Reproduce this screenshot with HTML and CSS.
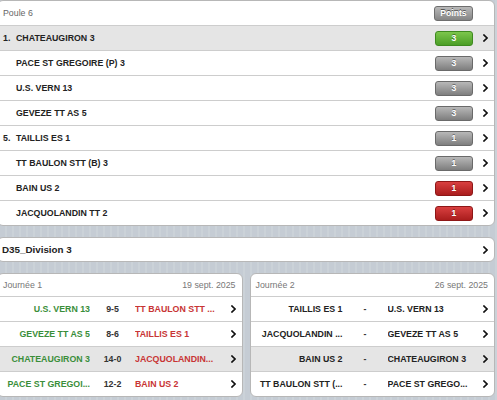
FILE: index.html
```html
<!DOCTYPE html>
<html lang="fr">
<head>
<meta charset="utf-8">
<title>Poule 6</title>
<link rel="stylesheet" href="styles.css">
</head>
<body>
<div class="page">
  <section class="card poule">
    <div class="poule-head">
      <span class="head-title">Poule 6</span>
      <span class="btn-points">Points</span>
    </div>
    <div class="rank-row current"><span class="rank">1.</span><span class="team">CHATEAUGIRON 3</span><span class="badge green">3</span><svg class="chev" viewBox="0 0 5 8"><polyline points="1,1 4,4 1,7"/></svg></div>
    <div class="rank-row"><span class="rank"></span><span class="team">PACE ST GREGOIRE (P) 3</span><span class="badge gray">3</span><svg class="chev" viewBox="0 0 5 8"><polyline points="1,1 4,4 1,7"/></svg></div>
    <div class="rank-row"><span class="rank"></span><span class="team">U.S. VERN 13</span><span class="badge gray">3</span><svg class="chev" viewBox="0 0 5 8"><polyline points="1,1 4,4 1,7"/></svg></div>
    <div class="rank-row"><span class="rank"></span><span class="team">GEVEZE TT AS 5</span><span class="badge gray">3</span><svg class="chev" viewBox="0 0 5 8"><polyline points="1,1 4,4 1,7"/></svg></div>
    <div class="rank-row"><span class="rank">5.</span><span class="team">TAILLIS ES 1</span><span class="badge gray">1</span><svg class="chev" viewBox="0 0 5 8"><polyline points="1,1 4,4 1,7"/></svg></div>
    <div class="rank-row"><span class="rank"></span><span class="team">TT BAULON STT (B) 3</span><span class="badge gray">1</span><svg class="chev" viewBox="0 0 5 8"><polyline points="1,1 4,4 1,7"/></svg></div>
    <div class="rank-row"><span class="rank"></span><span class="team">BAIN US 2</span><span class="badge red">1</span><svg class="chev" viewBox="0 0 5 8"><polyline points="1,1 4,4 1,7"/></svg></div>
    <div class="rank-row"><span class="rank"></span><span class="team">JACQUOLANDIN TT 2</span><span class="badge red">1</span><svg class="chev" viewBox="0 0 5 8"><polyline points="1,1 4,4 1,7"/></svg></div>
  </section>

  <section class="card division">
    <span class="division-name">D35_Division 3</span>
    <svg class="chev" viewBox="0 0 5 8"><polyline points="1,1 4,4 1,7"/></svg>
  </section>

  <div class="days">
    <section class="card day">
      <div class="day-head"><span>Journée 1</span><span>19 sept. 2025</span></div>
      <div class="match"><span class="home win">U.S. VERN 13</span><span class="score">9-5</span><span class="away loss">TT BAULON STT ...</span><svg class="chev" viewBox="0 0 5 8"><polyline points="1,1 4,4 1,7"/></svg></div>
      <div class="match"><span class="home win">GEVEZE TT AS 5</span><span class="score">8-6</span><span class="away loss">TAILLIS ES 1</span><svg class="chev" viewBox="0 0 5 8"><polyline points="1,1 4,4 1,7"/></svg></div>
      <div class="match current"><span class="home win">CHATEAUGIRON 3</span><span class="score">14-0</span><span class="away loss">JACQUOLANDIN...</span><svg class="chev" viewBox="0 0 5 8"><polyline points="1,1 4,4 1,7"/></svg></div>
      <div class="match"><span class="home win">PACE ST GREGOI...</span><span class="score">12-2</span><span class="away loss">BAIN US 2</span><svg class="chev" viewBox="0 0 5 8"><polyline points="1,1 4,4 1,7"/></svg></div>
    </section>
    <section class="card day">
      <div class="day-head"><span>Journée 2</span><span>26 sept. 2025</span></div>
      <div class="match"><span class="home">TAILLIS ES 1</span><span class="score dash">-</span><span class="away">U.S. VERN 13</span><svg class="chev" viewBox="0 0 5 8"><polyline points="1,1 4,4 1,7"/></svg></div>
      <div class="match"><span class="home">JACQUOLANDIN ...</span><span class="score dash">-</span><span class="away">GEVEZE TT AS 5</span><svg class="chev" viewBox="0 0 5 8"><polyline points="1,1 4,4 1,7"/></svg></div>
      <div class="match current"><span class="home">BAIN US 2</span><span class="score dash">-</span><span class="away">CHATEAUGIRON 3</span><svg class="chev" viewBox="0 0 5 8"><polyline points="1,1 4,4 1,7"/></svg></div>
      <div class="match"><span class="home">TT BAULON STT (...</span><span class="score dash">-</span><span class="away">PACE ST GREGO...</span><svg class="chev" viewBox="0 0 5 8"><polyline points="1,1 4,4 1,7"/></svg></div>
    </section>
  </div>
</div>
</body>
</html>
```

FILE: styles.css
```css
html, body {
  margin: 0;
  padding: 0;
}

body {
  background-color: #cbd2d8;
  background-image: repeating-linear-gradient(90deg, #c5ccd4 0 5px, #cbd2d8 5px 7px);
  font-family: "Liberation Sans", Arial, sans-serif;
  font-size: 8.8px;
  color: #222;
  overflow: hidden;
}

.page {
  margin: 0 2px 0 -3px;
}

.card {
  background: #fff;
  border: 1px solid #b7b7b7;
  border-radius: 6px;
  overflow: hidden;
}

.chev {
  width: 5px;
  height: 8px;
  flex: none;
  fill: none;
  stroke: #111;
  stroke-width: 1.6;
  stroke-linecap: square;
}

/* ranking */
.poule-head {
  height: 24px;
  display: flex;
  align-items: center;
  padding: 0 5px;
}

.head-title {
  flex: 1;
  color: #666;
}

.btn-points {
  width: 37px;
  height: 13px;
  margin-right: 16px;
  border: 1px solid #6e6e6e;
  border-radius: 3px;
  background: linear-gradient(#b9b9b9, #858585);
  color: #fff;
  font-weight: bold;
  font-size: 8.6px;
  line-height: 13px;
  text-align: center;
  text-shadow: 0 -1px 0 #555;
}

.rank-row {
  height: 24px;
  border-top: 1px solid #cdcdcd;
  display: flex;
  align-items: center;
  padding: 0 6px 0 5px;
  font-weight: bold;
}

.rank-row.current {
  background: #e5e5e5;
}

.rank {
  width: 13px;
  flex: none;
}

.team {
  flex: 1;
  white-space: nowrap;
}

.badge {
  width: 36px;
  height: 13px;
  margin-right: 10px;
  border: 1px solid #666;
  border-radius: 3px;
  color: #fff;
  font-size: 8.6px;
  line-height: 13px;
  text-align: center;
  text-shadow: 0 -1px 0 rgba(0, 0, 0, 0.4);
}

.badge.green {
  background: linear-gradient(#7cc64c, #4b9e26);
  border-color: #3e8a1f;
}

.badge.gray {
  background: linear-gradient(#b8b8b8, #7e7e7e);
  border-color: #6a6a6a;
}

.badge.red {
  background: linear-gradient(#d94040, #aa1d1d);
  border-color: #8e1717;
}

/* division */
.division {
  margin-top: 11px;
  height: 23px;
  display: flex;
  align-items: center;
  padding: 0 6px 0 4px;
}

.division-name {
  flex: 1;
  font-size: 9.8px;
  font-weight: bold;
  color: #222;
}

/* journées */
.days {
  margin-top: 11px;
  display: grid;
  grid-template-columns: 1fr 1fr;
  column-gap: 7px;
}

.day-head {
  height: 22px;
  display: flex;
  align-items: center;
  justify-content: space-between;
  padding: 0 6px 0 5px;
  color: #777;
}

.match {
  height: 24px;
  border-top: 1px solid #cdcdcd;
  display: grid;
  grid-template-columns: 87px 45px 1fr 5px;
  align-items: center;
  padding: 0 6px 0 5px;
  font-weight: bold;
  white-space: nowrap;
}

.match.current {
  background: #e5e5e5;
}

.home {
  text-align: right;
  overflow: hidden;
}

.score {
  text-align: center;
  color: #333;
}

.away {
  overflow: hidden;
}

.win {
  color: #3a8e3a;
}

.loss {
  color: #c83434;
}
```
